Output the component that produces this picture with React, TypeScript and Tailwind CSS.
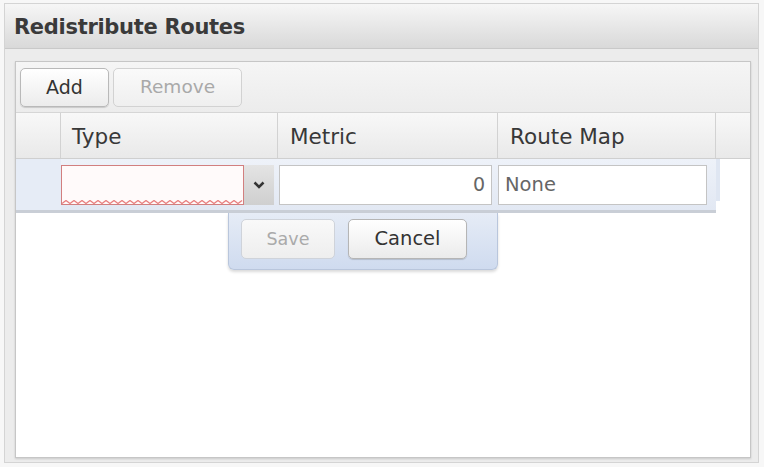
export default function App() {
    const font = "font-['DejaVu_Sans','Liberation_Sans',sans-serif]";

    return (
        <div className={`w-[764px] h-[467px] bg-[#f7f7f7] pt-[3px] pl-[4px] pr-[5px] pb-[4px] ${font}`}>
            <div className="h-full flex flex-col border border-[#d4d4d4] bg-[#ececec]">
                {/* title bar */}
                <div className="h-[45px] shrink-0 flex items-center pl-[9px] pt-[4px] bg-gradient-to-b from-[#f6f6f6] to-[#d9d9d9] border-b border-[#c9c9c9]">
                    <span className="text-[21px] font-bold text-[#3a3a3a] tracking-[-0.3px]">
                        Redistribute Routes
                    </span>
                </div>

                {/* grid panel */}
                <div className="flex-1 flex flex-col pl-[10px] pr-[7px] pt-[12px] pb-[4px]">
                    <div className="flex-1 flex flex-col border border-[#c6c6c6] bg-white shadow-[0_1px_2px_rgba(0,0,0,0.15)]">
                        {/* toolbar */}
                        <div className="h-[51px] shrink-0 flex items-center gap-[4px] px-[4px] bg-gradient-to-b from-[#f5f5f5] to-[#ececec] border-b border-[#d6d6d6]">
                            <button className="w-[89px] h-[39px] rounded-[5px] border border-[#b9b9b9] bg-gradient-to-b from-white to-[#ececec] text-[19px] text-[#333] shadow-[0_1px_1px_rgba(0,0,0,0.15)]">
                                Add
                            </button>
                            <button className="w-[129px] h-[39px] rounded-[5px] border border-[#d2d2d2] bg-gradient-to-b from-[#fafafa] to-[#efefef] text-[18.5px] text-[#a9a9a9]">
                                Remove
                            </button>
                        </div>

                        {/* header */}
                        <div className="h-[46px] shrink-0 flex bg-gradient-to-b from-[#f8f8f8] to-[#e9e9e9] border-b border-[#cfcfcf] text-[21.5px] text-[#383838]">
                            <div className="w-[45px] border-r border-[#d2d2d2]" />
                            <div className="w-[217px] border-r border-[#d2d2d2] flex items-center pl-[11px] pt-[3px]">Type</div>
                            <div className="w-[220px] border-r border-[#d2d2d2] flex items-center pl-[12px] pt-[3px]">Metric</div>
                            <div className="w-[218px] border-r border-[#d2d2d2] flex items-center pl-[12px] pt-[3px]">Route Map</div>
                            <div className="flex-1" />
                        </div>

                        {/* row editor */}
                        <div className="h-[54px] shrink-0 flex relative">
                            <div className="w-[700px] flex items-center bg-gradient-to-b from-[#eef2f9] to-[#e2e8f3] border-b-[3px] border-[#c9ced6] pr-[9px]">
                                <div className="w-[45px] h-full bg-[#e6ecf6]" />
                                <div className="w-[183px] h-[40px] flex flex-col border border-[#d27f7f] bg-[#fffafa]">
                                    <div className="flex-1" />
                                    <svg width="181" height="4" viewBox="0 0 181 4" className="block">
                                        <path
                                            d={Array.from({ length: 46 }, (_, i) => `${i === 0 ? "M" : "L"}${i * 4} ${i % 2 ? 0.5 : 3.5}`).join(" ")}
                                            fill="none"
                                            stroke="#e88080"
                                            strokeWidth="1.3"
                                        />
                                    </svg>
                                </div>
                                <div className="w-[30px] h-[40px] flex items-center justify-center bg-gradient-to-b from-[#e4e4e4] to-[#cfcfcf]">
                                    <svg width="12" height="8" viewBox="0 0 12 8">
                                        <path d="M1.5 1.5 L6 6 L10.5 1.5" fill="none" stroke="#333" strokeWidth="2.5" />
                                    </svg>
                                </div>
                                <div className="w-[213px] h-[40px] ml-[5px] border border-[#c4c4c4] bg-white flex items-center justify-end pr-[6px] text-[19px] text-[#666]">
                                    0
                                </div>
                                <div className="flex-1 h-[40px] ml-[6px] border border-[#c4c4c4] bg-white flex items-center pl-[6px] text-[19.5px] text-[#666]">
                                    None
                                </div>
                            </div>
                            <div className="w-[4px] h-[42px] bg-[#dfe6f2]" />
                            <div className="flex-1" />

                            {/* floating buttons */}
                            <div className="absolute left-[212px] top-[54px] w-[270px] h-[57px] flex items-start gap-[13px] pl-[12px] pt-[6px] rounded-b-[6px] border border-t-0 border-[#b9c6dc] bg-gradient-to-b from-[#e6ecf6] to-[#cfdbef] shadow-[0_2px_3px_rgba(0,0,0,0.15)]">
                                <button className="w-[94px] h-[40px] rounded-[5px] border border-[#cfd3da] bg-gradient-to-b from-[#f9f9f9] to-[#eeeeee] text-[17.5px] text-[#aaa]">
                                    Save
                                </button>
                                <button className="w-[119px] h-[40px] rounded-[5px] border border-[#b5b5b5] bg-gradient-to-b from-white to-[#ebebeb] text-[19.5px] text-[#333] shadow-[0_1px_1px_rgba(0,0,0,0.15)]">
                                    Cancel
                                </button>
                            </div>
                        </div>

                        {/* body */}
                        <div className="flex-1 bg-white" />
                    </div>
                </div>
            </div>
        </div>
    );
}
